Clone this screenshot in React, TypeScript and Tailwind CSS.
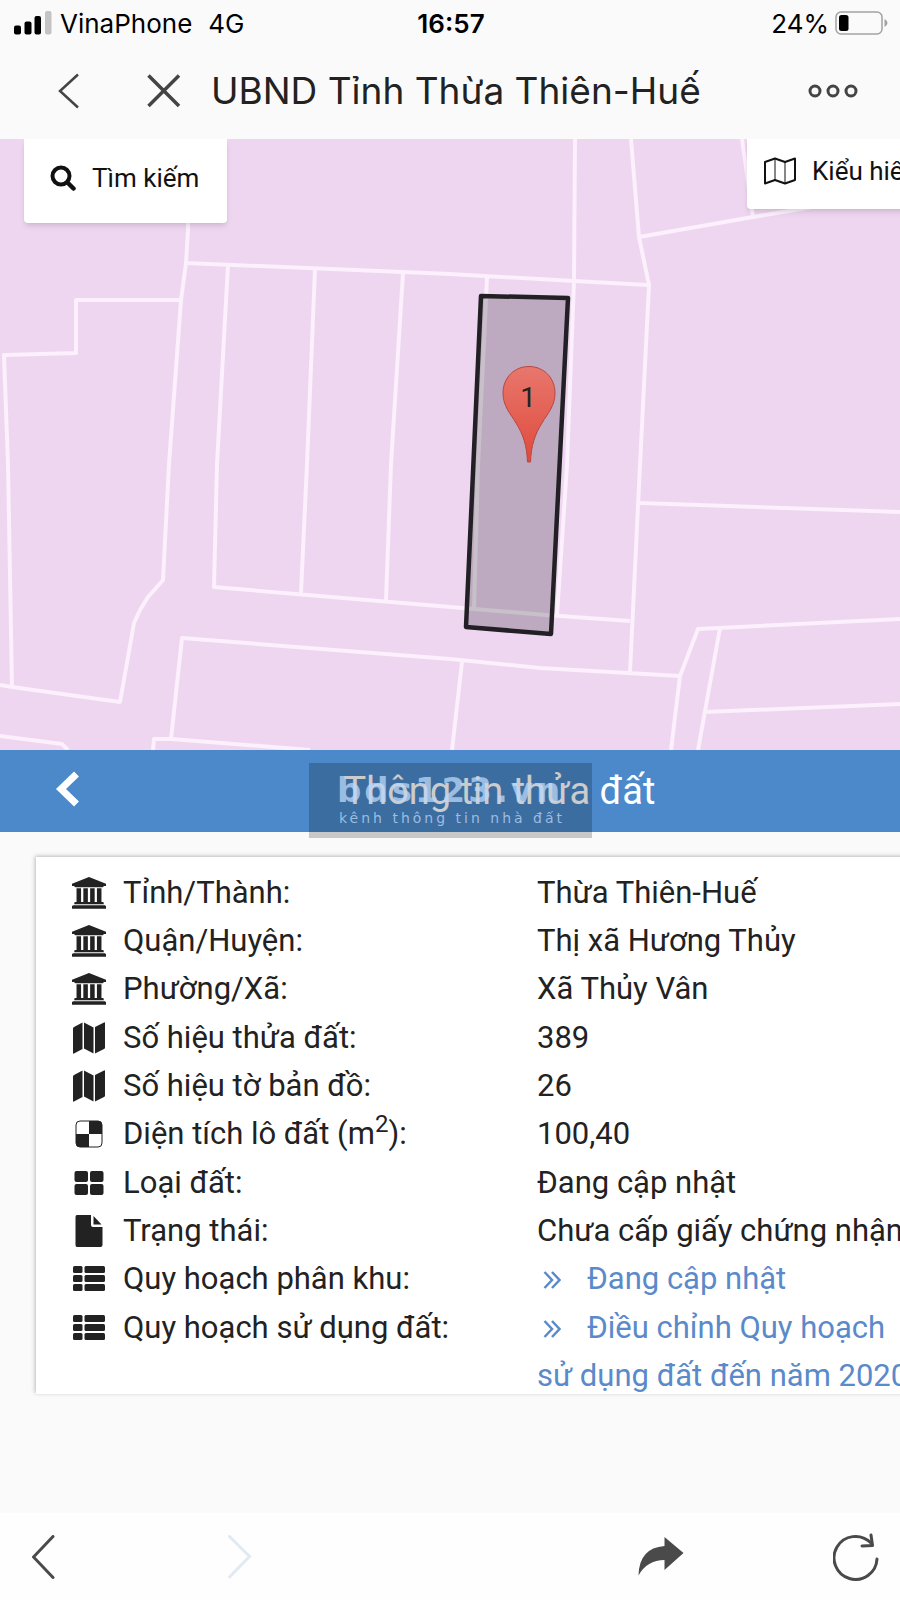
import type { ReactNode } from 'react';

type IconName = 'bank' | 'map' | 'area' | 'grid' | 'file' | 'list';

type InfoRow = {
  icon: IconName;
  label: ReactNode;
  value: string;
  isLink?: boolean;
};

const rows: InfoRow[] = [
  { icon: 'bank', label: 'Tỉnh/Thành:', value: 'Thừa Thiên-Huế' },
  { icon: 'bank', label: 'Quận/Huyện:', value: 'Thị xã Hương Thủy' },
  { icon: 'bank', label: 'Phường/Xã:', value: 'Xã Thủy Vân' },
  { icon: 'map', label: 'Số hiệu thửa đất:', value: '389' },
  { icon: 'map', label: 'Số hiệu tờ bản đồ:', value: '26' },
  { icon: 'area', label: <>Diện tích lô đất (m<sup className="text-2xl">2</sup>):</>, value: '100,40' },
  { icon: 'grid', label: 'Loại đất:', value: 'Đang cập nhật' },
  { icon: 'file', label: 'Trạng thái:', value: 'Chưa cấp giấy chứng nhận' },
  { icon: 'list', label: 'Quy hoạch phân khu:', value: 'Đang cập nhật', isLink: true },
  { icon: 'list', label: 'Quy hoạch sử dụng đất:', value: 'Điều chỉnh Quy hoạch sử dụng đất đến năm 2020', isLink: true },
];

// Parcel borders, in map units
const borders = [
  '189,139 188,230 186,263 181,300 169,464 163,580 148,597 140,610 134,623 120,702 12,687 0,685',
  '181,300 76,300 76,353 4,355 8,464 12,687',
  '186,263 450,274 574,281 648,285',
  '228,265 217,464 214,587 450,607 546,615 630,621',
  '315,269 307,464 301,593',
  '403,273 391,464 386,600',
  '487,277 486,300 478,465 474,608',
  '575,139 574,281 567,465 557,615',
  '631,139 639,237 649,285 640,465 630,672',
  '639,237 753,217 830,204',
  '742,139 753,217',
  '640,503 900,512',
  '171,739 182,638 450,659 540,668 680,676 698,629 900,619',
  '680,676 671,750',
  '720,628 698,750',
  '705,712 900,704',
  '462,662 452,750',
  '0,736 62,744 68,750',
  '153,750 154,739 171,739 310,750',
];

function RowIcon({ name }: { name: IconName }) {
  switch (name) {
    case 'bank':
      return (
        <svg viewBox="0 0 1920 1792" className="w-[34px]" fill="currentColor" aria-hidden="true">
          <path d="M960 0l960 384v128h-128q0 26-20.500 45t-48.500 19h-1526q-28 0-48.500-19t-20.500-45h-128v-128zM256 640h256v768h128v-768h256v768h128v-768h256v768h128v-768h256v768h59q28 0 48.500 19t20.500 45v64h-1664v-64q0-26 20.500-45t48.500-19h59v-768zM1851 1600q28 0 48.500 19t20.500 45v128h-1920v-128q0-26 20.500-45t48.500-19h1782z" />
        </svg>
      );
    case 'map':
      return (
        <svg viewBox="0 0 32 32" className="w-8" fill="currentColor" aria-hidden="true">
          <path d="M1 5L9.500 0.500V27L1 31.500Q0 32 0 31V6.500Q0 5.500 1 5ZM11 0.500L20.500 5.500V31.500L11 26.500ZM22 5L31 0.500Q32 0 32 1V25.500Q32 26.500 31 27L22 31.500Z" />
        </svg>
      );
    case 'area':
      return (
        <svg viewBox="0 0 28 28" className="w-7" aria-hidden="true">
          <rect x="1" y="1" width="26" height="26" rx="4" fill="#fff" stroke="currentColor" />
          <path d="M14 1H23Q27 1 27 5V14H14ZM14 14V27H5Q1 27 1 23V14Z" fill="currentColor" />
        </svg>
      );
    case 'grid':
      return (
        <svg viewBox="0 0 30 26" className="w-[30px]" fill="currentColor" aria-hidden="true">
          <rect x="0.500" y="1" width="13.500" height="11" rx="2" />
          <rect x="16" y="1" width="13.500" height="11" rx="2" />
          <rect x="0.500" y="14" width="13.500" height="11" rx="2" />
          <rect x="16" y="14" width="13.500" height="11" rx="2" />
        </svg>
      );
    case 'file':
      return (
        <svg viewBox="0 0 28 32" className="w-7" fill="currentColor" aria-hidden="true">
          <path d="M2 0H16V10Q16 12 18 12H27.500V30Q27.500 32 25.500 32H2Q0.500 32 0.500 30V2Q0.500 0 2 0ZM18.500 1L26.500 9.500H18.500Z" />
        </svg>
      );
    case 'list':
      return (
        <svg viewBox="0 0 32 26" className="w-8" fill="currentColor" aria-hidden="true">
          {[0, 9, 18].map((y) => (
            <g key={y}>
              <rect x="0" y={y} width="9.500" height="7" rx="1.500" />
              <rect x="11.500" y={y} width="20.500" height="7" rx="1.500" />
            </g>
          ))}
        </svg>
      );
  }
}

function StatusBar() {
  return (
    <div className="grid h-[46px] grid-cols-3 items-center pl-3.5 pr-3 text-[26px] text-black">
      <div className="flex items-center gap-2 whitespace-nowrap">
        <svg viewBox="0 0 38 24" className="h-6 w-[38px] shrink-0" aria-hidden="true">
          <rect x="0" y="14.500" width="7" height="9" rx="2" />
          <rect x="10.500" y="10.500" width="7" height="13" rx="2" />
          <rect x="20.500" y="5" width="6.500" height="18.500" rx="2" />
          <rect x="31" y="0" width="6.500" height="23.500" rx="2" fill="#c4c4c4" />
        </svg>
        <span>VinaPhone</span>
        <span className="ml-2">4G</span>
      </div>
      <time className="text-center font-semibold">16:57</time>
      <div className="flex items-center justify-end gap-1.5">
        <span>24%</span>
        <svg viewBox="0 0 53 24" className="h-6 w-[53px]" aria-hidden="true">
          <rect x="1" y="1" width="46" height="22" rx="5" fill="none" stroke="#a3a3a3" strokeWidth="1.500" />
          <rect x="4" y="4" width="9.500" height="16" rx="2.500" />
          <path d="M49.500 8Q52.500 9.500 52.500 12T49.500 16Z" fill="#a3a3a3" />
        </svg>
      </div>
    </div>
  );
}

function TitleBar() {
  return (
    <div className="flex h-[89px] items-center pl-[58px] pr-10 text-[#444]">
      <button type="button" aria-label="Quay lại">
        <svg viewBox="0 0 22 36" className="h-9 w-[22px]" fill="none" stroke="currentColor" strokeWidth="2.500" aria-hidden="true">
          <path d="M20 1.500L2 18L20 34.500" />
        </svg>
      </button>
      <button type="button" aria-label="Đóng" className="ml-[67px]">
        <svg viewBox="0 0 34 34" className="size-[34px]" fill="none" stroke="currentColor" strokeWidth="3.500" aria-hidden="true">
          <path d="M1.500 1.500L32 32M32 1.500L1.500 32" />
        </svg>
      </button>
      <h1 className="ml-[30px] flex-1 whitespace-nowrap text-[37px] text-[#222]">UBND Tỉnh Thừa Thiên-Huế</h1>
      <button type="button" aria-label="Tùy chọn">
        <svg viewBox="0 0 52 14" className="h-3.5 w-[52px]" fill="none" stroke="currentColor" strokeWidth="3" aria-hidden="true">
          <circle cx="7" cy="7" r="5" />
          <circle cx="25" cy="7" r="5" />
          <circle cx="43" cy="7" r="5" />
        </svg>
      </button>
    </div>
  );
}

function ParcelMap() {
  return (
    <section className="relative overflow-hidden bg-[#eed5f0]">
      <svg viewBox="0 139 900 611" className="block w-full" role="img" aria-label="Bản đồ thửa đất">
        <defs>
          <linearGradient id="pin" x1="0" y1="0" x2="0" y2="1">
            <stop offset="0" stopColor="#e8776d" />
            <stop offset="1" stopColor="#e04a3c" />
          </linearGradient>
        </defs>
        <g fill="none" stroke="#fbf0fc" strokeWidth="4" strokeLinejoin="round">
          {borders.map((points) => <polyline key={points} points={points} />)}
        </g>
        <polygon points="481,296 568,298 551,634 466,627" fill="#000" fillOpacity="0.200" stroke="#222024" strokeWidth="4.500" strokeLinejoin="round" />
        <path
          d="M529 366.500C514 366.500 503 378 503 393C503 406 510 413 516 423C523 434 527 446 527.500 462H530.500C531 446 535 434 542 423C548 413 555 406 555 393C555 378 544 366.500 529 366.500Z"
          fill="url(#pin)"
          stroke="#b5483f"
        />
        <text x="528" y="407" textAnchor="middle" className="text-[28px]" fill="#222">1</text>
      </svg>
      <button type="button" className="absolute left-6 top-0 flex h-[84px] items-center gap-4 rounded-b bg-white pb-1.5 pl-[26px] pr-7 text-[26px] text-[#111] shadow-md">
        <svg viewBox="0 0 26 26" className="size-[26px]" fill="none" stroke="currentColor" strokeWidth="4" aria-hidden="true">
          <circle cx="11" cy="11" r="8.500" />
          <path d="M17.500 17.500L23.500 23.500" strokeWidth="4.500" strokeLinecap="round" />
        </svg>
        Tìm kiếm
      </button>
      <button type="button" className="absolute left-[83%] top-0 flex h-[70px] items-center gap-4 whitespace-nowrap rounded-b bg-white pb-1.5 pl-[17px] pr-6 text-[26px] text-[#111] shadow-md">
        <svg viewBox="0 0 32 28" className="h-7 w-8" fill="none" stroke="currentColor" strokeWidth="2" strokeLinejoin="round" aria-hidden="true">
          <path d="M1 5L11 1.500L21 5L31 1.500V23L21 26.500L11 23L1 26.500Z" />
          <path d="M11 1.500V23M21 5V26.500" strokeWidth="1" />
        </svg>
        Kiểu hiển thị
      </button>
    </section>
  );
}

function Watermark() {
  return (
    <div className="absolute left-[309px] top-[13px] h-[75px] w-[283px] bg-black/20 pl-7 pt-2 font-['DejaVu_Sans',sans-serif] text-[#bcd8f8]/75">
      <p className="whitespace-nowrap text-[34px] font-bold leading-[38px] tracking-[3px]">bds123.vn</p>
      <p className="whitespace-nowrap pl-0.5 text-[14px] leading-[18px] tracking-[3px]">kênh thông tin nhà đất</p>
    </div>
  );
}

function ParcelInfo() {
  return (
    <section className="flex-1 overflow-hidden bg-[#fafafa]">
      {/* The embedded page is wider than the phone screen */}
      <div className="w-[111%]">
        <div className="relative grid h-[82px] grid-cols-[1fr_auto_1fr] items-center bg-[#4b89ca] text-white">
          <button type="button" aria-label="Quay lại" className="ml-[55px] justify-self-start pb-1">
            <svg viewBox="0 0 25 36" className="h-9 w-[25px]" fill="none" stroke="currentColor" strokeWidth="7" aria-hidden="true">
              <path d="M21.500 3L6 18L21.500 33" />
            </svg>
          </button>
          <h2 className="text-[38px]">Thông tin thửa đất</h2>
          <Watermark />
        </div>
        <div className="ml-9 mt-[25px] overflow-hidden bg-white pl-9 pr-[84px] pt-3 shadow-[-1px_-1px_4px_rgba(0,0,0,0.25)]">
          <table className="-mb-1.5 w-full text-[31px] leading-[48px] text-[#222]">
            <tbody>
              {rows.map((row) => (
                <tr key={row.icon + row.value} className="align-top nth-[3n]:h-[49px]">
                  <th scope="row" className="w-[465px] p-0 text-left font-normal">
                    <span className="flex items-center gap-[17px] whitespace-nowrap">
                      <span className="flex w-[34px] shrink-0 justify-center"><RowIcon name={row.icon} /></span>
                      <span>{row.label}</span>
                    </span>
                  </th>
                  <td className="p-0">
                    {row.isLink ? (
                      <a href="#quy-hoach" className="text-[#5a8aca]">
                        <svg viewBox="0 0 18 18" className="ml-1.5 mr-[26px] inline size-[18px] align-baseline" fill="none" stroke="currentColor" strokeWidth="2.500" aria-hidden="true">
                          <path d="M1.500 1L9 9L1.500 17M9 1L16.500 9L9 17" />
                        </svg>
                        {row.value}
                      </a>
                    ) : row.value}
                  </td>
                </tr>
              ))}
            </tbody>
          </table>
        </div>
      </div>
    </section>
  );
}

function BrowserToolbar() {
  return (
    <nav className="flex h-[87px] items-center justify-between bg-[#fefefe] pl-8 pr-[21px] text-[#4a4a4a]">
      <div className="flex items-center gap-[172px]">
        <button type="button" aria-label="Trang trước">
          <svg viewBox="0 0 24 44" className="h-11 w-6" fill="none" stroke="currentColor" strokeWidth="3" strokeLinecap="round" aria-hidden="true">
            <path d="M21 1.500L1.500 22L21 42.500" />
          </svg>
        </button>
        <button type="button" aria-label="Trang sau" disabled className="text-[#e3e9f3]">
          <svg viewBox="0 0 24 44" className="h-11 w-6" fill="none" stroke="currentColor" strokeWidth="3" strokeLinecap="round" aria-hidden="true">
            <path d="M1.500 1.500L21.500 21.500L1.500 42" />
          </svg>
        </button>
      </div>
      <div className="flex items-center gap-[149px]">
        <button type="button" aria-label="Chia sẻ">
          <svg viewBox="0 0 46 42" className="h-[42px] w-[46px]" fill="currentColor" aria-hidden="true">
            <path d="M26.500 1L45.500 17L26.500 34V24Q9 24 0.500 39.500Q1 12 26.500 10Z" />
          </svg>
        </button>
        <button type="button" aria-label="Tải lại">
          <svg viewBox="0 0 46 48" className="h-12 w-[46px]" fill="none" stroke="currentColor" strokeWidth="3" strokeLinecap="round" strokeLinejoin="round" aria-hidden="true">
            <path d="M44 26A21.500 21.500 0 1 1 37.500 9.500L39 12" />
            <path d="M38 2L39.500 12.500L29 13" />
          </svg>
        </button>
      </div>
    </nav>
  );
}

export default function App() {
  return (
    <div className="flex min-h-screen flex-col overflow-hidden bg-[#fafafa] font-[Roboto,sans-serif]">
      <header className="bg-[#fafafa] pb-1 font-[Inter,sans-serif]">
        <StatusBar />
        <TitleBar />
      </header>
      <ParcelMap />
      <ParcelInfo />
      <BrowserToolbar />
    </div>
  );
}
